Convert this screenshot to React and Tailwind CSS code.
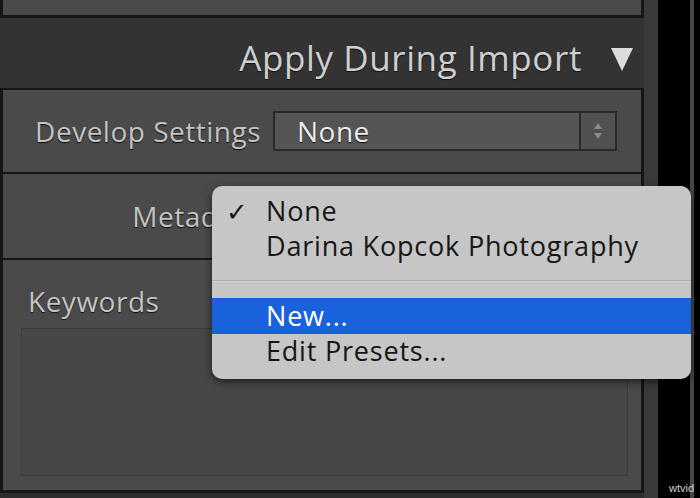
export default function App() {
  const font = { fontFamily: '"Open Sans", "Noto Sans", sans-serif' };
  return (
    <div className="w-[700px] h-[498px] bg-black flex overflow-hidden relative" style={font}>
      {/* Left panel column */}
      <div className="w-[644px] h-full flex flex-col bg-[#2e2e2e]">
        {/* top box (cut off) */}
        <div className="h-[18px] shrink-0 bg-[#4a4a4a] border-x-[3px] border-b-[3px] border-[#161616]" />
        {/* section header */}
        <div className="h-[70px] shrink-0 bg-[#333333] flex items-center justify-end pr-[10px] gap-[28px] pt-[10px]">
          <span className="text-[35px] text-[#cfcfcf] tracking-[0.6px] [text-shadow:0_1px_1px_#111]">Apply During Import</span>
          <svg width="24" height="26" viewBox="0 0 24 26" className="mt-[2px]">
            <path d="M1 2 L23 2 L12 25 Z" fill="#dcdcdc" />
          </svg>
        </div>
        {/* Develop settings */}
        <div className="h-[86px] shrink-0 bg-[#4a4a4a] border-x-[3px] border-y-[2px] border-[#161616] grid grid-cols-[270px_1fr] items-center">
          <span className="text-right pr-[12px] text-[28px] text-[#c4c4c4] tracking-[0.5px] [text-shadow:0_1px_1px_#111]">Develop Settings</span>
          <div className="w-[344px] h-[40px] border-2 border-[#2a2a2a] bg-[#555555] flex">
            <span className="flex-1 pl-[22px] text-[28px] leading-[36px] text-[#ededed] tracking-[0.5px] [text-shadow:0_1px_1px_#111]">None</span>
            <div className="w-[36px] border-l-2 border-[#2a2a2a] bg-[#515151] flex flex-col items-center justify-center">
              <svg width="10" height="20" viewBox="0 0 10 20">
                <path d="M5 2 L9 8 L1 8 Z" fill="#8a8a8a" />
                <path d="M5 18 L9 12 L1 12 Z" fill="#8a8a8a" />
              </svg>
            </div>
          </div>
        </div>
        {/* Metadata */}
        <div className="h-[86px] shrink-0 bg-[#4a4a4a] border-x-[3px] border-b-[2px] border-[#161616] grid grid-cols-[270px_1fr] items-center">
          <span className="text-right pr-[12px] text-[28px] text-[#c4c4c4] tracking-[0.5px] [text-shadow:0_1px_1px_#111]">Metadata</span>
          <div className="w-[344px] h-[40px] border-2 border-[#2a2a2a] bg-[#555555]" />
        </div>
        {/* Keywords */}
        <div className="h-[233px] shrink-0 bg-[#4a4a4a] border-x-[3px] border-b-[3px] border-[#161616] flex flex-col pl-[18px] pr-[13px]">
          <span className="pl-[7px] pt-[20px] h-[68px] text-[28px] text-[#c4c4c4] tracking-[0.5px] [text-shadow:0_1px_1px_#111]">Keywords</span>
          <div className="h-[148px] border border-[#3c3c3c] bg-[#474747]" />
        </div>
      </div>
      {/* right strip */}
      <div className="w-[14px] h-full bg-[#3a3a3a]" />
      <div className="w-[32px] h-full bg-black" />
      <div className="w-[4px] h-full bg-[#474747]" />

      {/* popup menu */}
      <div className="absolute left-[212px] top-[186px] w-[479px] h-[193px] bg-[#c6c6c6] rounded-[10px] shadow-[0_3px_8px_rgba(0,0,0,0.6)] pt-[8px] text-[27px] font-medium text-[#161616] tracking-[0.8px]">
        <div className="h-[35px] flex items-center">
          <span className="w-[54px] pl-[14px] text-[26px]">✓</span>
          <span>None</span>
        </div>
        <div className="h-[35px] flex items-center pl-[54px]">Darina Kopcok Photography</div>
        <div className="h-[34px] flex items-center">
          <div className="w-full h-[2px] bg-[#a9a9a9] border-b border-[#d4d4d4]" />
        </div>
        <div className="h-[36px] flex items-center pl-[54px] bg-[#1a62dc] text-white">New...</div>
        <div className="h-[34px] flex items-center pl-[54px]">Edit Presets...</div>
      </div>
      <span className="absolute right-[6px] bottom-[2px] text-[11px] text-[#cfcfcf]" style={{ fontFamily: '"Liberation Sans", sans-serif' }}>wtvid</span>
    </div>
  );
}
